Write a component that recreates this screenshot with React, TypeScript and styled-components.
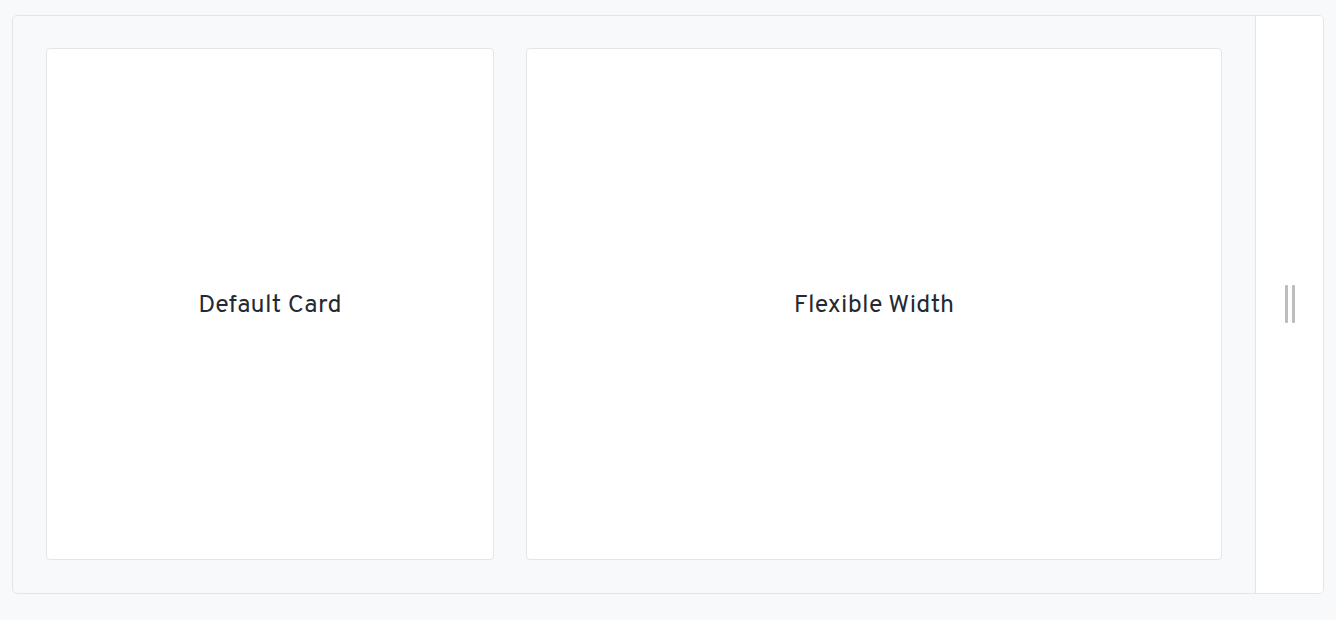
import React from "react";
import styled, { createGlobalStyle } from "styled-components";

const Global = createGlobalStyle`
  html, body { margin: 0; padding: 0; background: #f8f9fb; }
  body { font-family: "Overpass", "Noto Sans", "Open Sans", sans-serif; }
`;

const Page = styled.div`
  padding: 15px 12px 0 12px;
`;

const Frame = styled.div`
  display: flex;
  height: 579px;
  box-sizing: border-box;
  border: 1px solid #e3e5e9;
  border-radius: 5px;
  background: #f8f9fb;
  overflow: hidden;
`;

const Content = styled.div`
  flex: 1;
  display: flex;
  gap: 32px;
  padding: 32px 33px 33px 33px;
  box-sizing: border-box;
`;

const Card = styled.div<{ $width?: number }>`
  ${(p) => (p.$width ? `width: ${p.$width}px; flex: none;` : `flex: 1;`)}
  display: flex;
  align-items: center;
  justify-content: center;
  background: #ffffff;
  border: 1px solid #e3e5e9;
  border-radius: 4px;
  box-sizing: border-box;
  color: #242a33;
  font-size: 25px;
  letter-spacing: 0.3px;
  padding-top: 4px;
`;

const SidePanel = styled.div`
  width: 68px;
  flex: none;
  box-sizing: border-box;
  border-left: 1px solid #e3e5e9;
  background: #ffffff;
  display: flex;
  align-items: center;
  justify-content: center;
`;

const Handle = styled.div`
  display: flex;
  gap: 4px;
  margin-left: 0px;
  margin-top: -2px;
`;

const Bar = styled.div`
  width: 3px;
  height: 38px;
  background: #bdbdbd;
  border-radius: 1px;
`;

export default function App() {
  return (
    <>
      <Global />
      <Page>
        <Frame>
          <Content>
            <Card $width={448}>Default Card</Card>
            <Card>Flexible Width</Card>
          </Content>
          <SidePanel>
            <Handle>
              <Bar />
              <Bar />
            </Handle>
          </SidePanel>
        </Frame>
      </Page>
    </>
  );
}
